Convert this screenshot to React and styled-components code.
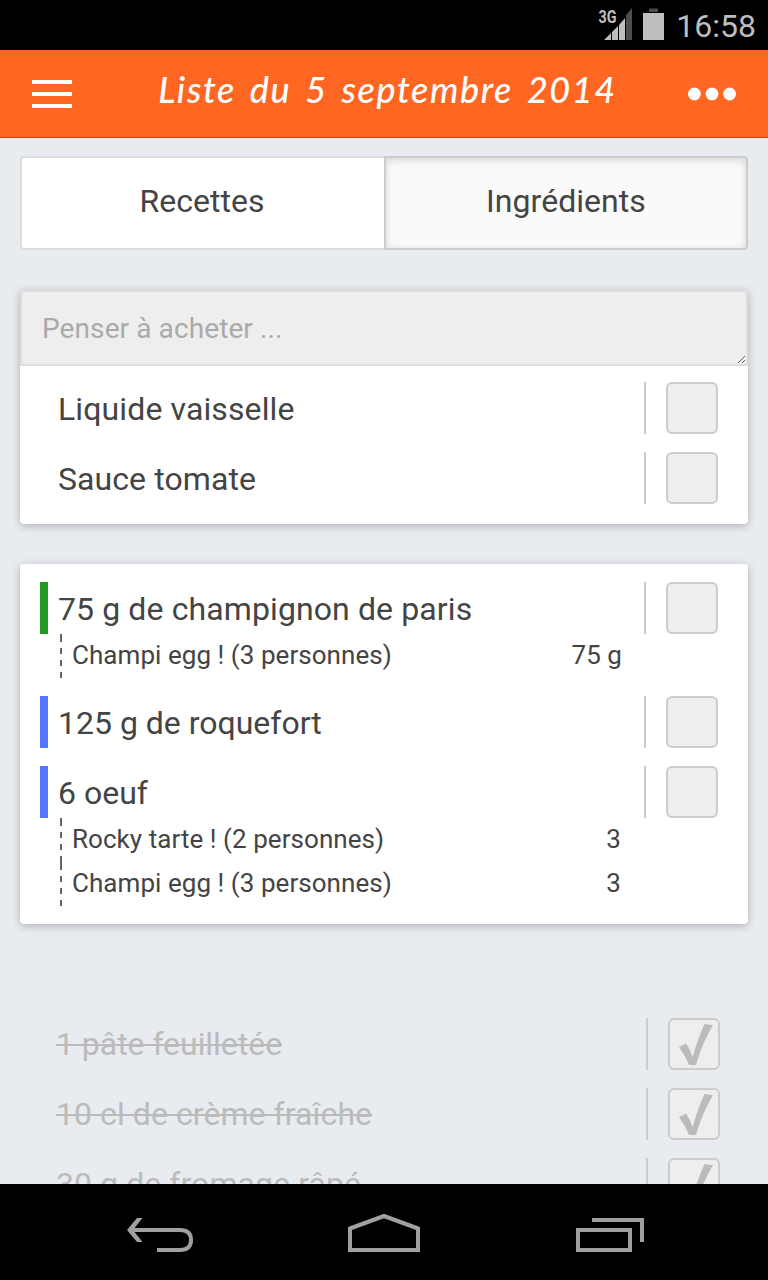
import React from "react";
import styled, { createGlobalStyle } from "styled-components";

const GlobalStyle = createGlobalStyle`
  *, *::before, *::after { box-sizing: border-box; }
  body { margin: 0; background: #e8ebf0; }
`;

const Screen = styled.div`
  display: flex;
  flex-direction: column;
  width: 768px;
  height: 1280px;
  overflow: hidden;
  background: #e8ebf0;
  color: #444;
  font-family: Roboto, "Liberation Sans", sans-serif;
`;

const StatusBar = styled.header`
  display: flex;
  flex: none;
  align-items: center;
  justify-content: flex-end;
  height: 50px;
  padding-right: 12px;
  background: #000;
`;

const StatusIcons = styled.svg`
  display: block;
  margin-right: 12px;
`;

const NetworkLabel = styled.text`
  fill: #bebebe;
  font: 700 18.5px Roboto, sans-serif;
`;

const Clock = styled.span`
  padding-top: 2px;
  color: #bebebe;
  font-size: 32px;
  line-height: 50px;
`;

const TitleBar = styled.nav`
  display: flex;
  flex: none;
  align-items: center;
  justify-content: space-between;
  height: 88px;
  padding: 0 32px;
  background: #ff6622;
  border-bottom: 1px solid #d04a10;
`;

const BarIcon = styled.svg`
  display: block;
  fill: #fff;
`;

const Title = styled.h1`
  margin: 0;
  padding: 0 0 9px 15px;
  color: #fff;
  font-family: Lato, "Liberation Sans", cursive;
  font-size: 36px;
  font-style: italic;
  font-weight: 500;
  letter-spacing: 1.6px;
  word-spacing: 4px;
  white-space: nowrap;
`;

const Content = styled.main`
  flex: 1;
  min-height: 0;
  padding: 18px 20px 0;
  overflow: hidden;
`;

const Tabs = styled.div`
  display: flex;
  height: 94px;
  margin-bottom: 40px;
`;

const Tab = styled.button`
  flex: ${(p) => (p.$active ? "none" : 1)};
  width: ${(p) => (p.$active ? "364px" : "auto")};
  padding: ${(p) => (p.$active ? "0 0 4px" : "0 2px 4px 0")};
  border: 2px solid ${(p) => (p.$active ? "#ccc" : "#ddd")};
  border-right-width: ${(p) => (p.$active ? "2px" : "0")};
  border-radius: ${(p) => (p.$active ? "0 4px 4px 0" : "4px 0 0 4px")};
  background: ${(p) => (p.$active ? "#fafafa" : "#fff")};
  box-shadow: ${(p) => (p.$active ? "inset 0 2px 8px rgba(0, 0, 0, 0.15)" : "none")};
  color: #444;
  font: 400 32px Roboto, sans-serif;
  letter-spacing: 0.05px;
`;

const Card = styled.section`
  padding: ${(p) => p.$padding};
  margin-bottom: 40px;
  border-radius: 4px;
  background: #fff;
  box-shadow: 0 2px 8px rgba(0, 0, 0, 0.25);
`;

const NoteField = styled.textarea`
  display: block;
  width: 100%;
  height: 76px;
  margin: 0 0 16px;
  padding: 19px 20px 17px;
  border: 2px solid #ddd;
  border-radius: 4px 4px 0 0;
  outline: 0;
  overflow: hidden;
  resize: vertical;
  background: #eee;
  font: 400 28px/36px Roboto, sans-serif;
  letter-spacing: 0.1px;
  &::placeholder { color: #aaa; opacity: 1; }
`;

const ItemList = styled.ul`
  display: flex;
  flex-direction: column;
  gap: 18px;
  margin: 0;
  padding: ${(p) => (p.$done ? "54px 28px 0 16px" : "0 30px 0 20px")};
  list-style: none;
`;

const Row = styled.div`
  display: flex;
  height: 52px;
`;

const Marker = styled.span`
  flex: none;
  width: 8px;
  margin-right: 10px;
  background: ${(p) => p.$color || "transparent"};
`;

const Spacer = styled.span`
  flex: none;
  width: 20px;
`;

const Label = styled.span`
  flex: 1;
  color: ${(p) => (p.$done ? "#bbb" : "#444")};
  font-size: 32px;
  line-height: ${(p) => (p.$done ? "53px" : "54px")};
  letter-spacing: ${(p) => p.$tracking || 0}px;
  white-space: nowrap;
  text-decoration: ${(p) => (p.$done ? "line-through" : "none")};
  text-decoration-thickness: 2px;
`;

const CheckSlot = styled.span`
  flex: none;
  display: flex;
  justify-content: flex-end;
  width: 74px;
  border-left: 2px solid #ccc;
`;

const Checkbox = styled.span`
  width: 52px;
  height: 52px;
  border: 2px solid #ccc;
  border-radius: 6px;
  background: #eee;
`;

const CheckMark = styled.svg`
  display: block;
  width: 48px;
  height: 48px;
  fill: #bbb;
`;

const SubRow = styled.div`
  display: flex;
  justify-content: space-between;
  height: 44px;
  margin-left: 20px;
  padding: 0 96px 0 12px;
  background:
    linear-gradient(#666, #666) 0 0 / 2px 2px no-repeat,
    repeating-linear-gradient(#666 0 6px, transparent 6px 12px) 0 2px / 2px 42px no-repeat;
  font-size: 26px;
  line-height: 43px;
  letter-spacing: 0.05px;
  white-space: nowrap;
`;

const Amount = styled.span`
  padding-right: ${(p) => (p.$unitless ? "1px" : "0")};
`;

const SystemBar = styled.footer`
  flex: none;
  height: 96px;
  background: #000;
`;

const SystemIcons = styled.svg`
  display: block;
  fill: none;
  stroke: #a0a0a0;
  stroke-width: 4;
`;

const reminders = [
  { name: "Liquide vaisselle", tracking: 0.12 },
  { name: "Sauce tomate", tracking: 0.08 },
];

const ingredients = [
  {
    name: "75 g de champignon de paris",
    tracking: 0.11,
    color: "#229922",
    uses: [{ recipe: "Champi egg ! (3 personnes)", amount: "75 g" }],
  },
  { name: "125 g de roquefort", color: "#5577ff" },
  {
    name: "6 oeuf",
    color: "#5577ff",
    uses: [
      { recipe: "Rocky tarte ! (2 personnes)", amount: "3" },
      { recipe: "Champi egg ! (3 personnes)", amount: "3" },
    ],
  },
];

const bought = [
  { name: "1 pâte feuilletée", tracking: -0.04 },
  { name: "10 cl de crème fraîche", tracking: 0.07 },
  { name: "30 g de fromage râpé", tracking: 0.07 },
];

function Items({ items, done }) {
  return (
    <ItemList $done={done}>
      {items.map((item) => (
        <li key={item.name}>
          <Row>
            {done ? <Spacer /> : <Marker $color={item.color} />}
            <Label $done={done} $tracking={item.tracking}>
              {item.name}
            </Label>
            <CheckSlot>
              <Checkbox>
                {done && (
                  <CheckMark viewBox="0 0 48 48">
                    <path d="M9 27 L16 23.5 Q20 29 22.5 37 Q28 18 34.5 4 L43 5.2 Q32 23 26 45 L19 45 Q15 35 9 27Z" />
                  </CheckMark>
                )}
              </Checkbox>
            </CheckSlot>
          </Row>
          {(item.uses || []).map((use) => (
            <SubRow key={use.recipe}>
              <span>{use.recipe}</span>
              <Amount $unitless={!use.amount.includes(" ")}>{use.amount}</Amount>
            </SubRow>
          ))}
        </li>
      ))}
    </ItemList>
  );
}

export default function App() {
  return (
    <Screen>
      <GlobalStyle />
      <StatusBar>
        <StatusIcons width="68" height="50" viewBox="596 0 68 50">
          <NetworkLabel x="598.5" y="23" textLength="18" lengthAdjust="spacingAndGlyphs">3G</NetworkLabel>
          <path fill="#bebebe" d="M604 40 L611 33 V40Z M612 32 L618 26 V40 H612Z M619 25 L625 18 V40 H619Z" />
          <path fill="#4d4d4d" d="M626 15 L632 8 V40 H626Z" />
          <path fill="#bebebe" d="M643 13 H664 V40 H643Z" />
          <path fill="#4d4d4d" d="M649 8.5 H658 V12 H649Z" />
        </StatusIcons>
        <Clock>16:58</Clock>
      </StatusBar>
      <TitleBar>
        <BarIcon width="40" height="28">
          <path d="M0 0H40V4H0Z M0 12H40V16H0Z M0 24H40V28H0Z" />
        </BarIcon>
        <Title>Liste du 5 septembre 2014</Title>
        <BarIcon width="48" height="14">
          <circle cx="6.4" cy="7" r="6.4" />
          <circle cx="24" cy="7" r="6.4" />
          <circle cx="41.6" cy="7" r="6.4" />
        </BarIcon>
      </TitleBar>
      <Content>
        <Tabs>
          <Tab>Recettes</Tab>
          <Tab $active>Ingrédients</Tab>
        </Tabs>
        <Card $padding="0 0 20px">
          <NoteField placeholder="Penser à acheter ..." />
          <Items items={reminders} />
        </Card>
        <Card $padding="18px 0">
          <Items items={ingredients} />
        </Card>
        <Items items={bought} done />
      </Content>
      <SystemBar>
        <SystemIcons width="768" height="96" viewBox="0 1184 768 96">
          <path d="M157 1250 H180 C188 1250 191 1246 191 1240 C191 1234 188 1230 180 1230 H131" />
          <path fill="#a0a0a0" stroke="none" d="M127 1230 L137 1218 H142.500 L133 1230 L142.500 1242 H137Z" />
          <path d="M350 1250 V1228.500 L384 1216 L418 1228.500 V1250Z" />
          <path d="M578 1230 H630 V1250 H578Z M592 1220 H642 V1242" />
        </SystemIcons>
      </SystemBar>
    </Screen>
  );
}
